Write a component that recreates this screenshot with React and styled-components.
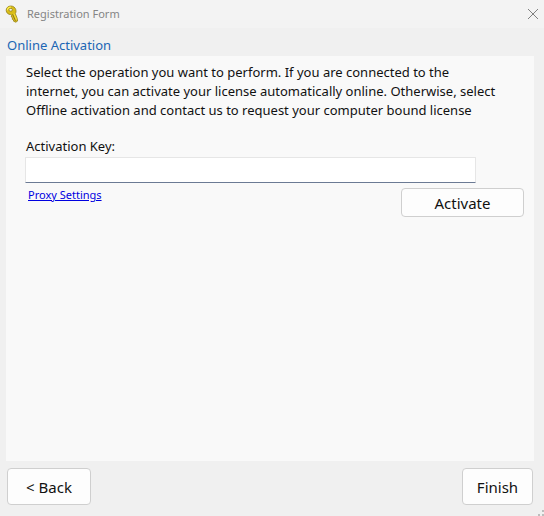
import React, { useState } from 'react';
import styled, { createGlobalStyle } from 'styled-components';

const GlobalStyle = createGlobalStyle`
  * {
    box-sizing: border-box;
  }

  body {
    margin: 0;
    background: #f0f0f0;
    font-family: 'Noto Sans', 'Open Sans', sans-serif;
    font-size: 13px;
    color: #111111;
  }
`;

const Window = styled.div`
  position: relative;
  display: flex;
  flex-direction: column;
  min-height: 100vh;
`;

const TitleBar = styled.header`
  display: flex;
  align-items: center;
  height: 28px;
  padding: 0 3px 0 4px;
  background: #f3f3f3;
`;

const Title = styled.h1`
  flex: 1;
  margin: 0 0 0 7px;
  font-size: 11px;
  font-weight: 400;
  line-height: 20px;
  color: #858585;
`;

const CloseButton = styled.button`
  display: flex;
  padding: 2px;
  border: none;
  background: none;
  color: #808080;
`;

const Heading = styled.h2`
  margin: 0;
  padding: 7px 7px 1px;
  font-size: 13px;
  font-weight: 400;
  line-height: 20px;
  color: #1c66b4;
`;

const Panel = styled.main`
  flex: 1;
  margin: 0 10px 0 6px;
  padding: 7px 10px 20px 19px;
  background: #f9f9f9;
`;

const Description = styled.p`
  max-width: 476px;
  margin: 0 0 16px;
  padding-left: 1px;
  line-height: 19px;
`;

const Label = styled.label`
  display: block;
  padding-left: 1px;
  line-height: 20px;
`;

const KeyInput = styled.input`
  display: block;
  width: calc(100% - 48px);
  height: 26px;
  margin: 1px 0 5px;
  padding: 0 6px;
  border: 1px solid #e6e6e6;
  border-bottom-color: #6b7a94;
  border-radius: 1px;
  background: #ffffff;
  font: inherit;
  outline: none;
`;

const ActionRow = styled.div`
  display: flex;
  justify-content: space-between;
  align-items: flex-start;
`;

const ProxyLink = styled.a`
  margin-left: 3px;
  font-size: 11px;
  line-height: 14px;
  color: #0000e0;
`;

const Button = styled.button`
  width: ${({ $width }) => $width}px;
  height: ${({ $height }) => $height}px;
  padding: 0;
  border: 1px solid #cfcfcf;
  border-radius: 4px;
  background: #fdfdfd;
  font-family: inherit;
  font-size: 15px;
  color: #111111;
`;

const Footer = styled.footer`
  display: flex;
  justify-content: space-between;
  padding: 7px 11px 11px 7px;
`;

const Grip = styled.svg`
  position: absolute;
  right: 0;
  bottom: 0;
`;

const KeyIcon = () => (
  <svg width="16" height="18" viewBox="0 0 16 18" aria-hidden="true">
    <path
      d="M6.800 1C4.100 1 2.200 2.900 2.200 5.200C2.200 7.800 4.200 9.500 6.700 9.600L7.600 10.400L7.300 12L8.600 12.800L8.200 14.200L9.500 15L9.600 16.200L11.800 17.200L13.600 16L13.200 13.400L11.300 8.600C12 7.600 12.200 6.300 11.800 4.700C11.200 2.400 9.200 1 6.800 1Z"
      fill="#d9bd18"
      stroke="#94801b"
      strokeWidth="0.8"
    />
    <path d="M3.500 5.300C3.600 3.400 5 2.200 6.900 2.200" fill="none" stroke="#fff04d" strokeWidth="1.200" />
    <ellipse cx="6.700" cy="4.800" rx="1.800" ry="1.400" fill="#f6f2da" stroke="#85721b" strokeWidth="0.7" />
    <path d="M8.600 9.200l2.900 6.600" stroke="#81701f" strokeWidth="0.9" />
    <path d="M9.900 8.600l2.600 6.200" stroke="#f5df38" strokeWidth="1.100" />
  </svg>
);

const CloseIcon = () => (
  <svg width="12" height="12" viewBox="0 0 12 12" aria-hidden="true">
    <path d="M1 1l10 10M11 1L1 11" stroke="currentColor" strokeWidth="1" />
  </svg>
);

const App = () => {
  const [activationKey, setActivationKey] = useState('');

  return (
    <>
      <GlobalStyle />
      <Window>
        <TitleBar>
          <KeyIcon />
          <Title>Registration Form</Title>
          <CloseButton type="button" aria-label="Close">
            <CloseIcon />
          </CloseButton>
        </TitleBar>

        <Heading>Online Activation</Heading>

        <Panel>
          <Description>
            Select the operation you want to perform. If you are connected to the internet, you can
            activate your license automatically online. Otherwise, select Offline activation and
            contact us to request your computer bound license
          </Description>
          <Label htmlFor="activation-key">Activation Key:</Label>
          <KeyInput
            id="activation-key"
            type="text"
            value={activationKey}
            onChange={(e) => setActivationKey(e.target.value)}
          />
          <ActionRow>
            <ProxyLink href="#proxy">Proxy Settings</ProxyLink>
            <Button type="button" $width={123} $height={29}>Activate</Button>
          </ActionRow>
        </Panel>

        <Footer>
          <Button type="button" $width={84} $height={37}>&lt; Back</Button>
          <Button type="button" $width={71} $height={37}>Finish</Button>
        </Footer>

        <Grip width="6" height="6" viewBox="0 0 6 6" aria-hidden="true">
          <path d="M4 0h2v2H4zM0 4h2v2H0zM4 4h2v2H4z" fill="#bdbdbd" />
        </Grip>
      </Window>
    </>
  );
};

export default App;
